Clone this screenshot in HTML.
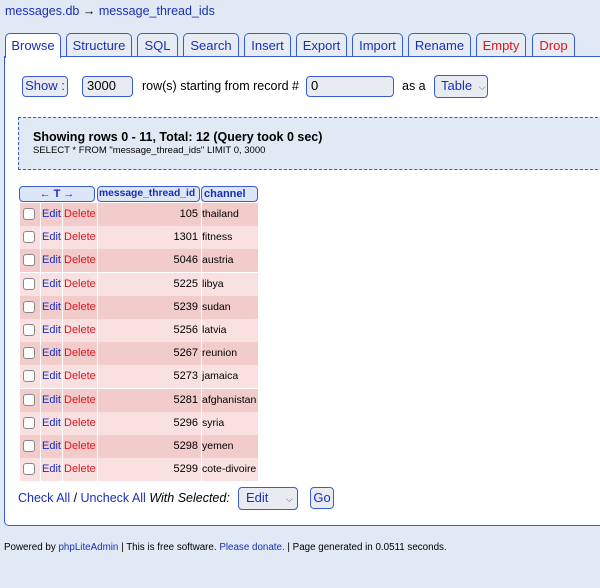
<!DOCTYPE html>
<html><head><style>
body{margin:0;width:600px;height:588px;background:#e1e9f4;font-family:"Liberation Sans",Arial,sans-serif;font-size:12px;position:relative;overflow:hidden;color:#000}
a{color:#1a2fb8;text-decoration:none}
.abs{position:absolute;white-space:nowrap}
.tab{position:absolute;top:33px;height:23px;border:1px solid #3a5bd6;border-bottom:none;border-radius:5px 5px 0 0;background:#e7ecf3;color:#1a2fb8;font-size:13px;text-align:center;line-height:24px;box-sizing:border-box}
.btn{position:absolute;border:1px solid #3a5bd6;border-radius:4px;background:#e8ecf2;font-size:13px;line-height:18px;box-sizing:border-box;white-space:nowrap;overflow:hidden}
.row{position:absolute;left:20px;width:238px;height:23px;font-size:11px;line-height:23px;white-space:nowrap}
.row div{position:absolute;top:0;height:23px}
.cb{left:3px;top:5px!important;width:12px;height:12px!important;border:1px solid #888;border-radius:3px;background:#fff;box-sizing:border-box}
</style></head><body>
<div class="abs" style="left:5px;top:4px;font-size:12.5px"><a>messages.db</a> → <a>message_thread_ids</a></div>
<div class="abs" style="left:4px;top:56px;width:620px;height:470px;background:#fff;border:1px solid #3a5bd6;border-radius:0 0 0 5px;box-sizing:border-box"></div>
<div class="tab" style="left:5px;width:56px;height:25px;background:#fff;font-size:13px">Browse</div>
<div class="tab" style="left:66px;width:66px">Structure</div>
<div class="tab" style="left:137px;width:41px">SQL</div>
<div class="tab" style="left:183px;width:56px">Search</div>
<div class="tab" style="left:244px;width:47px">Insert</div>
<div class="tab" style="left:296px;width:51px">Export</div>
<div class="tab" style="left:352px;width:51px">Import</div>
<div class="tab" style="left:408px;width:63px">Rename</div>
<div class="tab" style="left:476px;width:50px;color:#e0141e">Empty</div>
<div class="tab" style="left:532px;width:43px;color:#e0141e">Drop</div>

<div class="btn" style="left:22px;top:76px;width:46px;height:21px;color:#1a2fb8;text-align:center">Show :</div>
<div class="btn" style="left:82px;top:76px;width:51px;height:21px;padding-left:4px">3000</div>
<div class="abs" style="left:142px;top:79px;font-size:12.5px">row(s) starting from record #</div>
<div class="btn" style="left:306px;top:76px;width:88px;height:21px;padding-left:4px">0</div>
<div class="abs" style="left:402px;top:79px;font-size:12.5px">as a</div>
<div class="btn" style="left:434px;top:75px;width:54px;height:23px;color:#1a2fb8;padding-left:6px;line-height:20px">Table <span style="font-size:9px;color:#555;margin-left:3px">⌵</span></div>

<div class="abs" style="left:18px;top:117px;width:600px;height:53px;background:#e1e9f4;border:1px dashed #3a5bd6;box-sizing:border-box"></div>
<div class="abs" style="left:33px;top:130px;font-size:12.5px;font-weight:bold">Showing rows 0 - 11, Total: 12 (Query took 0 sec)</div>
<div class="abs" style="left:33px;top:145px;font-size:9.5px">SELECT * FROM "message_thread_ids" LIMIT 0, 3000</div>

<div class="btn" style="left:19px;top:186px;width:76px;height:16px;background:#dde6f7;color:#1a2fb8;text-align:center;font-size:11px;line-height:14px;font-weight:bold">← T →</div>
<div class="btn" style="left:97px;top:186px;width:103px;height:16px;background:#dde6f7;color:#1a2fb8;font-size:10.3px;line-height:14px;font-weight:bold;padding-left:1px">message_thread_id</div>
<div class="btn" style="left:201px;top:186px;width:57px;height:16px;background:#dde6f7;color:#1a2fb8;font-size:11px;line-height:14px;font-weight:bold;padding-left:2px">channel</div>

<div id="rows"></div>
<script>
var d=[[105,"thailand"],[1301,"fitness"],[5046,"austria"],[5225,"libya"],[5239,"sudan"],[5256,"latvia"],[5267,"reunion"],[5273,"jamaica"],[5281,"afghanistan"],[5296,"syria"],[5298,"yemen"],[5299,"cote-divoire"]];
var h="";
d.forEach(function(r,i){var bg=i%2?"#f9e1e1":"#f2cbcb";
h+='<div class="row" style="top:'+Math.round(203+i*23.2)+'px;background:'+bg+'"><div class="cb"></div><div style="left:22px;color:#1a2fb8">Edit</div><div style="left:44px;color:#e0141e">Delete</div><div style="left:77px;width:103px;border-left:1px solid #fff;border-right:1px solid #fff;text-align:right">'+r[0]+'&nbsp;</div><div style="left:182px;font-size:10.5px">'+r[1]+'</div><div style="left:20px;height:23px;border-left:1px solid #fff"></div><div style="left:42px;border-left:1px solid #fff"></div></div>';});
document.getElementById("rows").innerHTML=h;
</script>

<div class="abs" style="left:18px;top:491px;font-size:12.5px"><a>Check All</a> / <a>Uncheck All</a> <i>With Selected:</i></div>
<div class="btn" style="left:238px;top:487px;width:60px;height:23px;color:#1a2fb8;padding-left:7px;line-height:20px">Edit <span style="font-size:9px;color:#555;margin-left:14px">⌵</span></div>
<div class="btn" style="left:310px;top:487px;width:24px;height:22px;color:#1a2fb8;text-align:center;line-height:20px">Go</div>

<div class="abs" style="left:4px;top:542px;font-size:9.8px">Powered by <a>phpLiteAdmin</a> | This is free software. <a>Please donate.</a> | Page generated in 0.0511 seconds.</div>
</body></html>
